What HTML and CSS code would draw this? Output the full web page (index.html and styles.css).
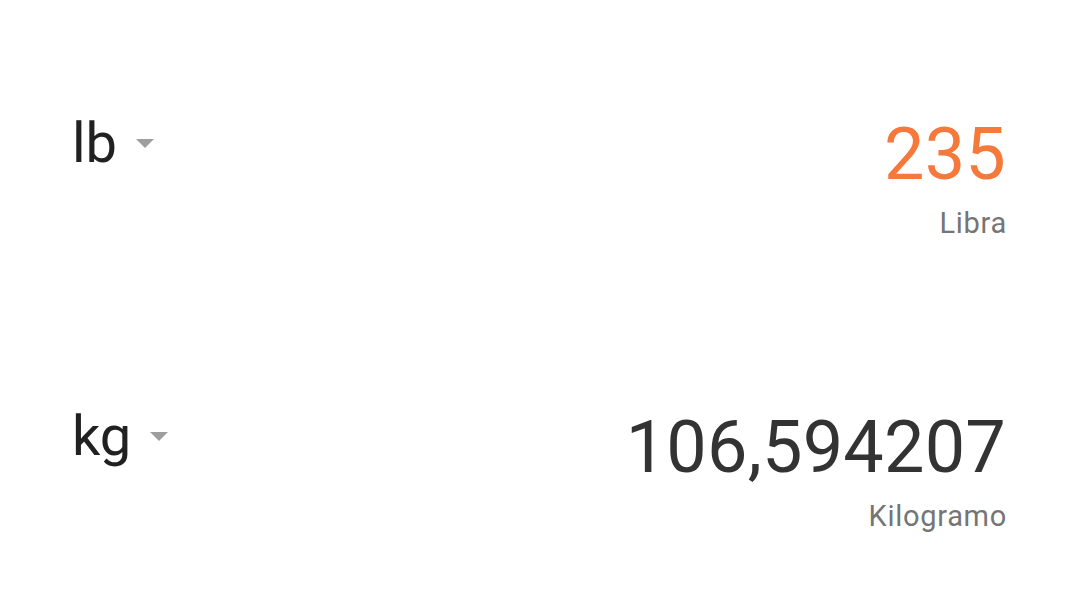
FILE: index.html
```html
<!DOCTYPE html>
<html lang="es">
<head>
<meta charset="UTF-8">
<meta name="viewport" content="width=device-width, initial-scale=1.0">
<title>Conversor de peso</title>
<link rel="stylesheet" href="styles.css">
</head>
<body>
<div class="converter">
    <div class="unit-row">
        <div class="unit-select">
            <span class="unit-code">lb</span>
            <span class="caret"></span>
        </div>
        <div class="unit-value">
            <div class="amount active">235</div>
            <div class="unit-name">Libra</div>
        </div>
    </div>
    <div class="unit-row">
        <div class="unit-select">
            <span class="unit-code">kg</span>
            <span class="caret"></span>
        </div>
        <div class="unit-value">
            <div class="amount">106,594207</div>
            <div class="unit-name">Kilogramo</div>
        </div>
    </div>
</div>
</body>
</html>
```

FILE: styles.css
```css
body {
    font-family: Roboto, "Noto Sans", sans-serif;
    margin: 0;
    padding: 0;
    background-color: #fff;
}
.converter {
    display: flex;
    flex-direction: column;
    gap: 163px;
    padding: 111px 74px 0;
}
.unit-row {
    display: flex;
    justify-content: space-between;
    align-items: flex-start;
}
.unit-select {
    display: flex;
    align-items: center;
    margin-left: -2px;
}
.unit-code {
    font-size: 56px;
    line-height: 64px;
    color: #212121;
}
.caret {
    width: 0;
    height: 0;
    margin-left: 19px;
    border-left: 9px solid transparent;
    border-right: 9px solid transparent;
    border-top: 9px solid #9e9e9e;
}
.unit-value {
    text-align: right;
    padding-top: 4px;
}
.amount {
    font-size: 72px;
    line-height: 80px;
    letter-spacing: 0.2px;
    color: #333;
}
.amount.active {
    color: #f5793a;
}
.unit-name {
    margin-top: 10px;
    margin-right: -1px;
    font-size: 29px;
    line-height: 36px;
    letter-spacing: 0.7px;
    color: #757575;
}
```
